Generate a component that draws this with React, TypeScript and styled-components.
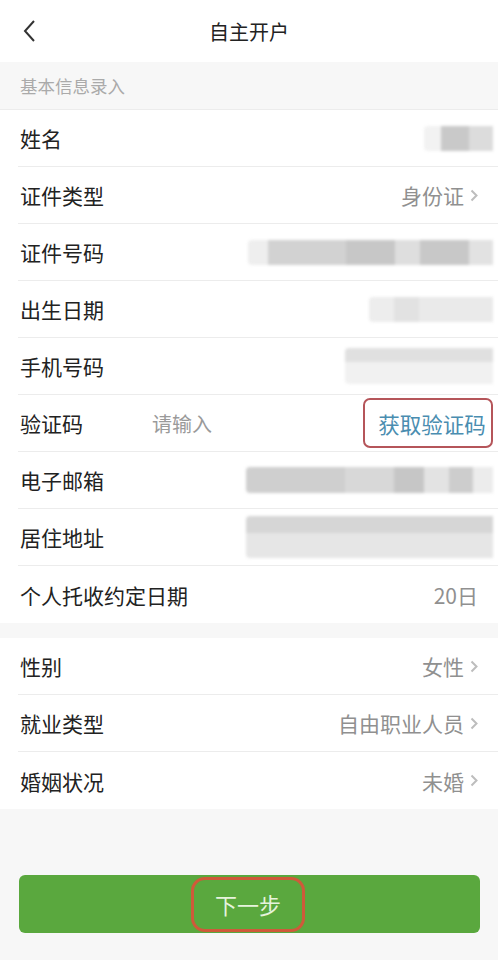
import React from "react";
import styled, { createGlobalStyle } from "styled-components";

const Global = createGlobalStyle`
  html, body {
    margin: 0;
    padding: 0;
    background: #f7f7f7;
  }
  body {
    font-family: "Noto Sans CJK SC", "Noto Sans", sans-serif;
    color: #222;
  }
`;

const Page = styled.div`
  width: 498px;
  min-height: 960px;
  background: #f7f7f7;
  display: flex;
  flex-direction: column;
`;

const NavBar = styled.div`
  height: 62px;
  background: #fff;
  display: grid;
  grid-template-columns: 60px 1fr 60px;
  align-items: center;
`;

const Back = styled.div`
  display: flex;
  align-items: center;
  padding-left: 22px;
`;

const Title = styled.div`
  text-align: center;
  font-size: 20px;
  color: #222;
`;

const SectionHead = styled.div`
  height: 48px;
  display: flex;
  align-items: center;
  padding-left: 20px;
  font-size: 17.5px;
  color: #aaa;
  border-bottom: 1px solid #ececec;
  box-sizing: border-box;
`;

const Group = styled.div`
  background: #fff;
  padding-left: 18px;
`;

const Row = styled.div<{ $last?: boolean }>`
  height: 57px;
  display: flex;
  align-items: center;
  padding-right: 5px;
  border-bottom: ${(p) => (p.$last ? "none" : "1px solid #ececec")};
  box-sizing: border-box;
`;

const Label = styled.div`
  font-size: 21px;
  color: #222;
  padding-left: 2px;
  flex-shrink: 0;
`;

const Placeholder = styled.div`
  font-size: 20px;
  color: #9a9a9a;
  margin-left: 69px;
`;

const Value = styled.div`
  margin-left: auto;
  display: flex;
  align-items: center;
  gap: 6px;
  font-size: 21px;
  color: #909090;
  padding-right: 15px;
`;

const Blur = styled.div<{ $w: number; $h: number }>`
  margin-left: auto;
  width: ${(p) => p.$w}px;
  height: ${(p) => p.$h}px;
  filter: blur(1.5px);
  border-radius: 4px 0 0 4px;
`;

const CodeBtn = styled.div`
  margin-left: auto;
  height: 50px;
  width: 130px;
  box-sizing: border-box;
  border: 2px solid #b5555a;
  border-radius: 7px;
  display: flex;
  align-items: center;
  justify-content: center;
  font-size: 21.5px;
  color: #4a8db0;
  padding-left: 8px;
`;

const Gap = styled.div`
  height: 15px;
`;

const Footer = styled.div`
  padding: 66px 18px 0 19px;
`;

const NextBtn = styled.div`
  height: 58px;
  background: #5aa83e;
  border-radius: 6px;
  display: flex;
  align-items: center;
  justify-content: center;
`;

const NextText = styled.div`
  width: 114px;
  height: 55px;
  box-sizing: border-box;
  border: 3px solid #cf5a3a;
  border-radius: 14px;
  display: flex;
  align-items: center;
  justify-content: center;
  font-size: 22px;
  color: #e6f3dc;
  margin-left: -3px;
`;

function Chevron() {
  return (
    <svg width="8" height="13" viewBox="0 0 8 13">
      <path d="M1.5 1.5 L6.5 6.5 L1.5 11.5" fill="none" stroke="#bdbdbd" strokeWidth="2" />
    </svg>
  );
}

const blurs: Record<string, { w: number; h: number; bg: string }> = {
  name: { w: 69, h: 25, bg: "linear-gradient(90deg,#f2f2f2 0 25%,#c9c9c9 25% 65%,#dcdcdc 65%)" },
  id: { w: 245, h: 25, bg: "linear-gradient(90deg,#eeeeee 0 8%,#d2d2d2 8% 40%,#c7c7c7 40% 60%,#dedede 60% 70%,#c8c8c8 70% 90%,#e2e2e2 90%)" },
  birth: { w: 124, h: 25, bg: "linear-gradient(90deg,#ededed 0 20%,#e2e2e2 20% 40%,#eaeaea 40%)" },
  phone: { w: 148, h: 36, bg: "linear-gradient(180deg,#e0e0e0 0 40%,#f1f1f1 40%)" },
  email: { w: 247, h: 26, bg: "linear-gradient(90deg,#cfcfcf 0 40%,#d8d8d8 40% 60%,#c6c6c6 60% 72%,#e3e3e3 72% 82%,#cdcdcd 82% 92%,#ececec 92%)" },
  addr: { w: 247, h: 42, bg: "linear-gradient(180deg,#d6d6d6 0 40%,#e6e6e6 40%)" },
};

function Masked({ k }: { k: string }) {
  const b = blurs[k];
  return <Blur $w={b.w} $h={b.h} style={{ background: b.bg }} />;
}

export default function App() {
  return (
    <Page>
      <Global />
      <NavBar>
        <Back>
          <svg width="14" height="24" viewBox="0 0 14 24">
            <path d="M12 2 L3 12 L12 22" fill="none" stroke="#333" strokeWidth="2" />
          </svg>
        </Back>
        <Title>自主开户</Title>
        <div />
      </NavBar>
      <SectionHead>基本信息录入</SectionHead>
      <Group>
        <Row>
          <Label>姓名</Label>
          <Masked k="name" />
        </Row>
        <Row>
          <Label>证件类型</Label>
          <Value>身份证<Chevron /></Value>
        </Row>
        <Row>
          <Label>证件号码</Label>
          <Masked k="id" />
        </Row>
        <Row>
          <Label>出生日期</Label>
          <Masked k="birth" />
        </Row>
        <Row>
          <Label>手机号码</Label>
          <Masked k="phone" />
        </Row>
        <Row>
          <Label>验证码</Label>
          <Placeholder>请输入</Placeholder>
          <CodeBtn>获取验证码</CodeBtn>
        </Row>
        <Row>
          <Label>电子邮箱</Label>
          <Masked k="email" />
        </Row>
        <Row>
          <Label>居住地址</Label>
          <Masked k="addr" />
        </Row>
        <Row $last>
          <Label>个人托收约定日期</Label>
          <Value>20日</Value>
        </Row>
      </Group>
      <Gap />
      <Group>
        <Row>
          <Label>性别</Label>
          <Value>女性<Chevron /></Value>
        </Row>
        <Row>
          <Label>就业类型</Label>
          <Value>自由职业人员<Chevron /></Value>
        </Row>
        <Row $last>
          <Label>婚姻状况</Label>
          <Value>未婚<Chevron /></Value>
        </Row>
      </Group>
      <Footer>
        <NextBtn>
          <NextText>下一步</NextText>
        </NextBtn>
      </Footer>
    </Page>
  );
}
